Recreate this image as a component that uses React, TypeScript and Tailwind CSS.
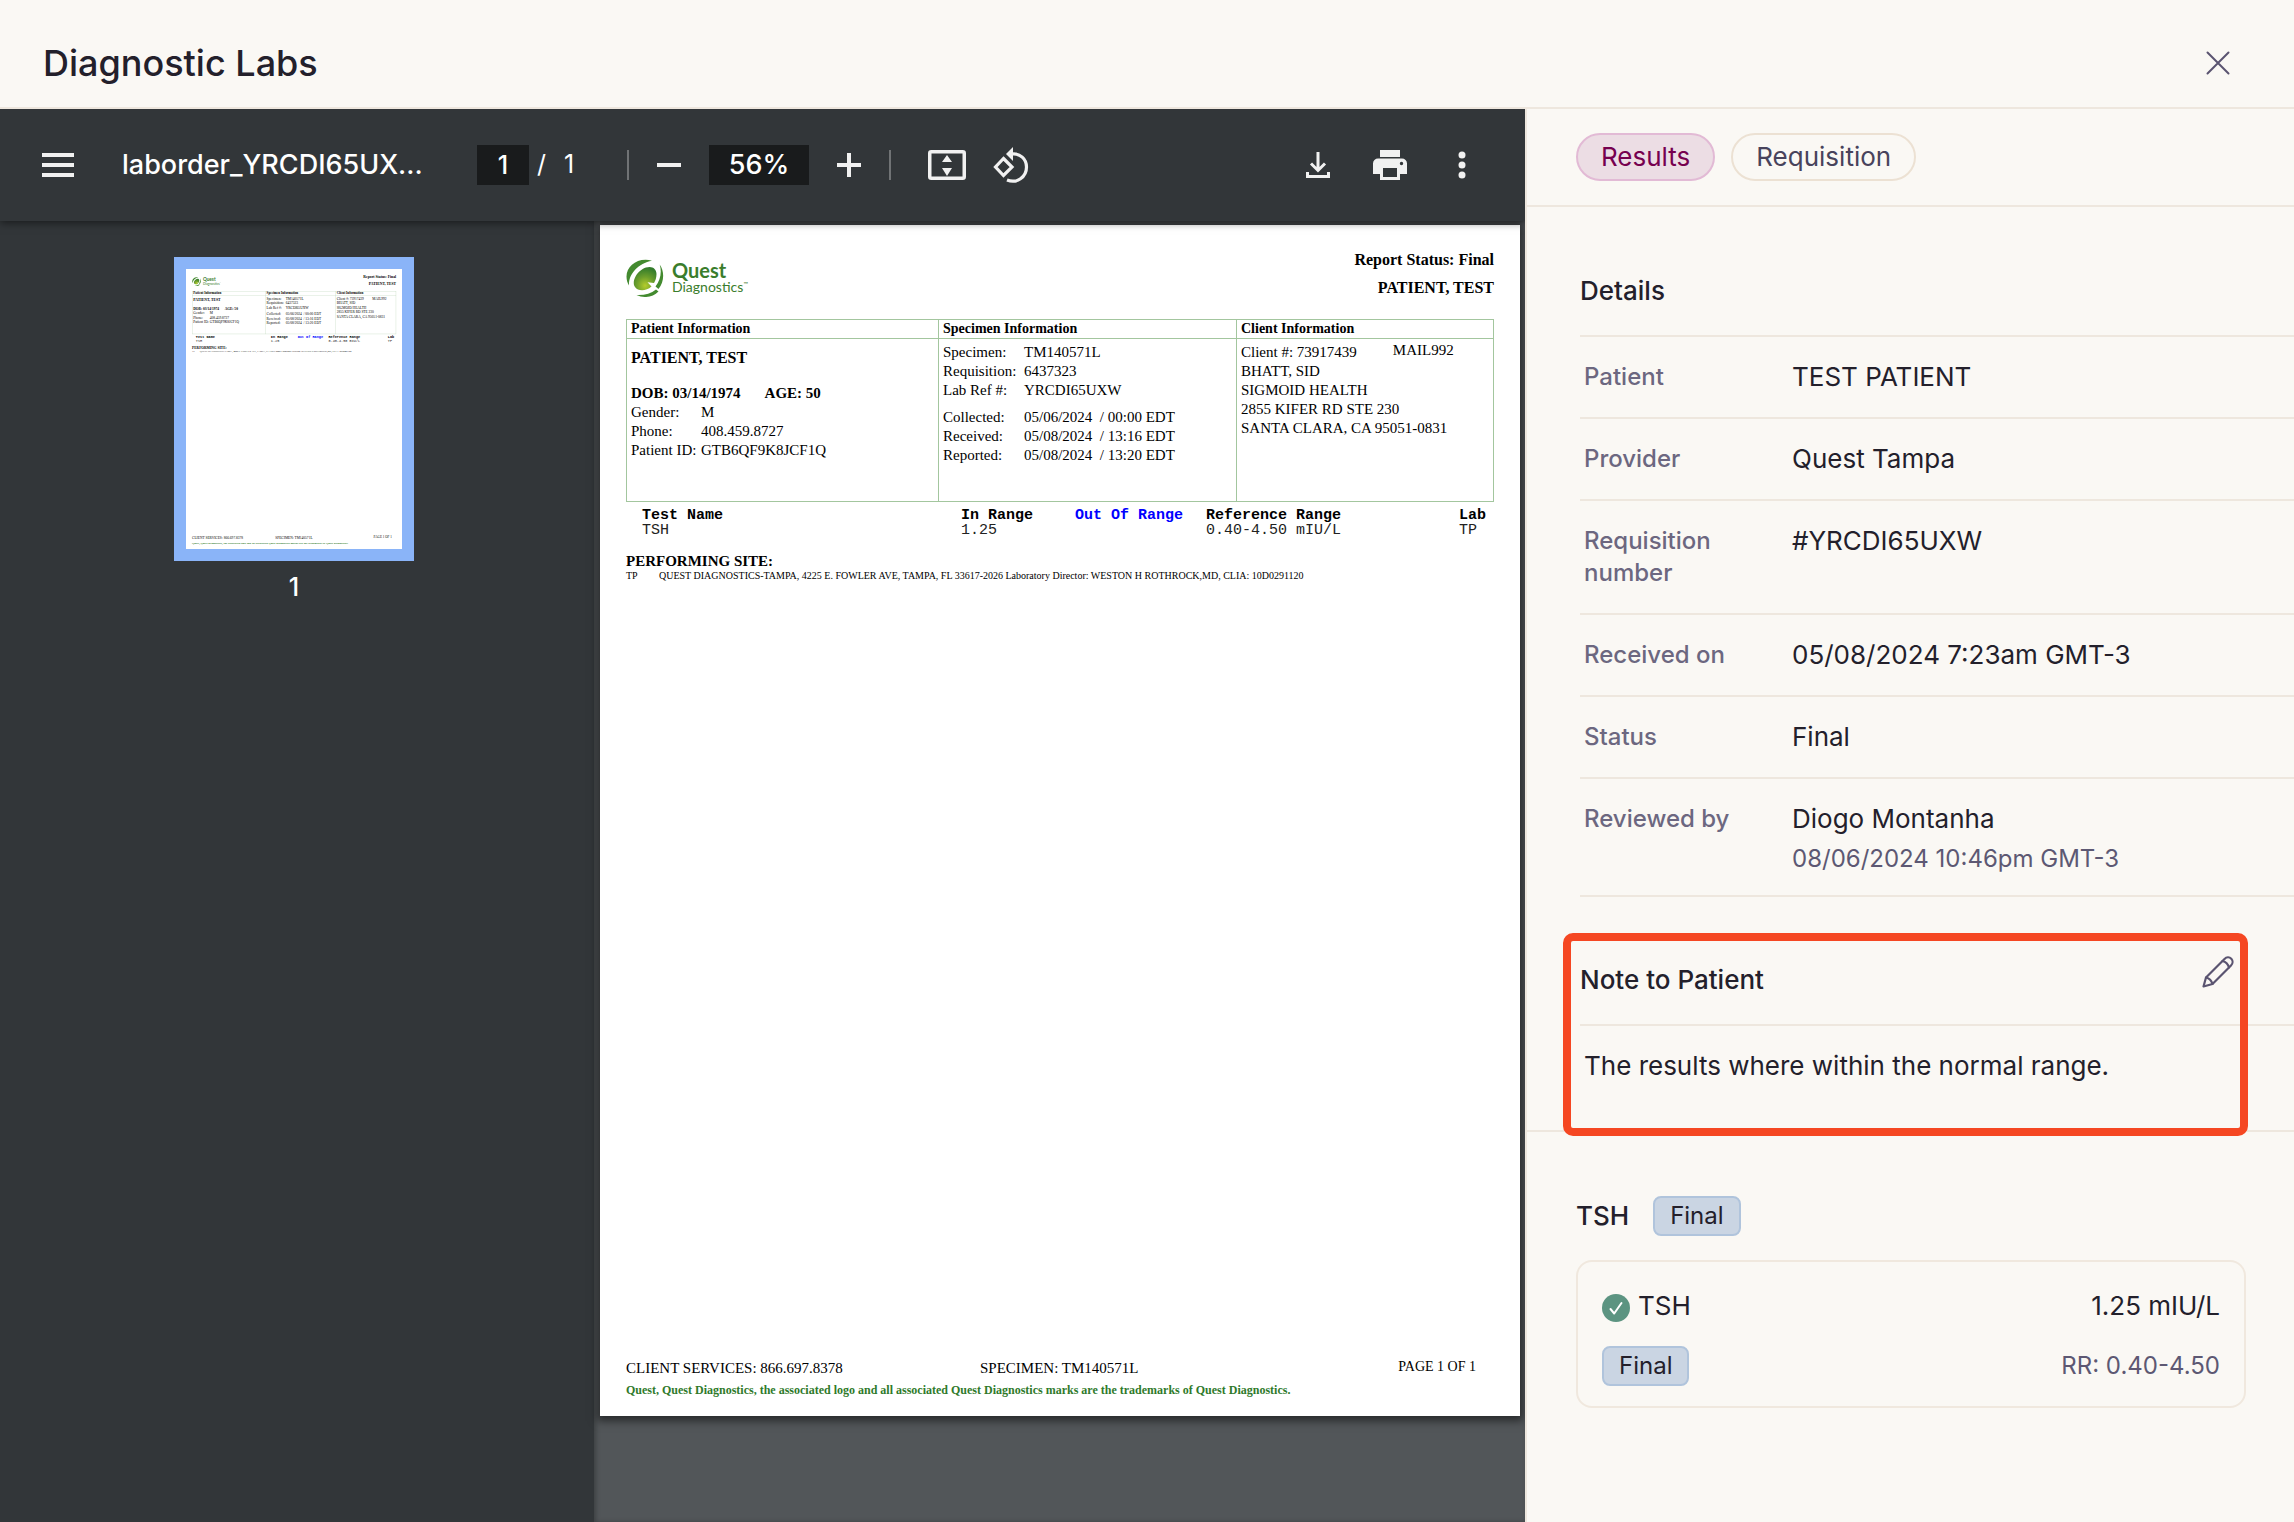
import { useState } from "react";

const DETAILS = [
  { label: "Patient", value: "TEST PATIENT" },
  { label: "Provider", value: "Quest Tampa" },
  { label: "Requisition number", value: "#YRCDI65UXW" },
  { label: "Received on", value: "05/08/2024 7:23am GMT-3" },
  { label: "Status", value: "Final" },
] as const;

const SPECIMEN_IDS = [
  ["Specimen:", "TM140571L"],
  ["Requisition:", "6437323"],
  ["Lab Ref #:", "YRCDI65UXW"],
] as const;

const SPECIMEN_DATES = [
  ["Collected:", "05/06/2024  / 00:00 EDT"],
  ["Received:", "05/08/2024  / 13:16 EDT"],
  ["Reported:", "05/08/2024  / 13:20 EDT"],
] as const;

const PATIENT_FIELDS = [
  ["Gender:", "M"],
  ["Phone:", "408.459.8727"],
  ["Patient ID:", "GTB6QF9K8JCF1Q"],
] as const;

function QuestLogo(): React.JSX.Element {
  return (
    <div className="mt-[13px] flex items-center gap-2">
      <svg viewBox="0 0 38 38" className="h-[38px] w-[38px]" aria-hidden="true">
        <defs>
          <radialGradient id="quest-leaf" cx="0.5" cy="0.8" r="0.75">
            <stop offset="0" stopColor="#b4cc2c" />
            <stop offset="0.5" stopColor="#6d9f2c" />
            <stop offset="1" stopColor="#347c2c" />
          </radialGradient>
        </defs>
        <path d="M26 1.700C12-2 .5 7 .5 17.500C.5 21 1.500 24 3 26.500C2.500 15 12 4.500 26 1.700Z" fill="#438a2f" />
        <path
          d="M20 8.500C26 6.500 30.500 9.500 30.500 15C30.500 18.500 29.500 21.500 28 24L21.500 23.200L25.500 27.500C20 32.500 12 32.500 9 28C5 21.500 12 11 20 8.500Z"
          fill="url(#quest-leaf)"
        />
        <path d="M33.700 5.500C38.500 12 38.500 23 32.500 30L29.500 27.500C34.500 21 36 13 33.700 5.500Z" fill="#438a2f" />
        <path d="M10.500 36C18 36.500 25 34.500 30 30.500L32.500 32.500C27 38.500 18 39.500 10.500 36Z" fill="#438a2f" />
      </svg>
      <div className="font-[family-name:Lato,sans-serif] text-[#3a7d2c]">
        <div className="text-xl leading-[18px] font-bold">Quest</div>
        <div className="flex text-sm leading-4">
          Diagnostics
          <span className="text-[6px] leading-[10px]">™</span>
        </div>
      </div>
    </div>
  );
}

function FieldList({ fields, wide }: { readonly fields: readonly (readonly [string, string])[]; readonly wide?: boolean }): React.JSX.Element {
  return (
    <dl className={wide ? "grid grid-cols-[81px_1fr]" : "grid grid-cols-[70px_1fr]"}>
      {fields.map(([label, value]) => (
        <div key={label} className="contents">
          <dt className="whitespace-nowrap">{label}</dt>
          <dd className="whitespace-pre">{value}</dd>
        </div>
      ))}
    </dl>
  );
}

function ReportPage(): React.JSX.Element {
  return (
    <article className="flex aspect-[17/22] w-full flex-col bg-white px-[26px] pb-[18px] font-[family-name:'Liberation_Serif',serif] text-[15px] leading-[19px] text-black">
      <header className="flex h-[94px] items-start justify-between pt-[21px]">
        <QuestLogo />
        <div className="text-right text-base leading-7 font-bold">
          <p>Report Status: Final</p>
          <p>PATIENT, TEST</p>
        </div>
      </header>

      <table className="w-full table-fixed border-collapse">
        <thead>
          <tr className="text-left text-[14px] leading-[18px]">
            <th className="w-[312px] border border-[#a3c69e] px-1 py-0">Patient Information</th>
            <th className="w-[298px] border border-[#a3c69e] px-1 py-0">Specimen Information</th>
            <th className="border border-[#a3c69e] px-1 py-0">Client Information</th>
          </tr>
        </thead>
        <tbody>
          <tr className="h-[163px] align-top">
            <td className="border border-[#a3c69e] px-1 pt-[9px]">
              <p className="text-base leading-5 font-bold">PATIENT, TEST</p>
              <p className="mt-4 flex gap-6 font-bold">
                <span>DOB: 03/14/1974</span>
                <span>AGE: 50</span>
              </p>
              <FieldList fields={PATIENT_FIELDS} />
            </td>
            <td className="border border-[#a3c69e] px-1 pt-1">
              <FieldList fields={SPECIMEN_IDS} wide />
              <div className="mt-2">
                <FieldList fields={SPECIMEN_DATES} wide />
              </div>
            </td>
            <td className="border border-[#a3c69e] px-1 pt-1">
              <p className="flex gap-9">
                <span>Client #: 73917439</span>
                <span className="leading-[14px]">MAIL992</span>
              </p>
              <p>BHATT, SID</p>
              <p>SIGMOID HEALTH</p>
              <p>2855 KIFER RD STE 230</p>
              <p>SANTA CLARA, CA 95051-0831</p>
            </td>
          </tr>
        </tbody>
      </table>

      <table className="mt-1.5 w-full table-fixed font-[family-name:'Liberation_Mono',monospace] text-[15px] leading-[15px]">
        <thead>
          <tr className="text-left whitespace-nowrap">
            <th className="w-[335px] p-0 pl-4">Test Name</th>
            <th className="w-[114px] p-0">In Range</th>
            <th className="w-[131px] p-0 text-[#0000ff]">Out Of Range</th>
            <th className="w-[253px] p-0">Reference Range</th>
            <th className="p-0">Lab</th>
          </tr>
        </thead>
        <tbody>
          <tr className="text-[#222222]">
            <td className="p-0 pl-4">TSH</td>
            <td className="p-0">1.25</td>
            <td className="p-0" />
            <td className="p-0">0.40-4.50 mIU/L</td>
            <td className="p-0">TP</td>
          </tr>
        </tbody>
      </table>

      <h3 className="mt-3.5 text-[15px] leading-[18px] font-bold">PERFORMING SITE:</h3>
      <p className="flex text-[10px] leading-3">
        <span className="w-[33px]">TP</span>
        <span className="whitespace-nowrap">
          QUEST DIAGNOSTICS-TAMPA, 4225 E. FOWLER AVE, TAMPA, FL 33617-2026 Laboratory Director: WESTON H ROTHROCK,MD, CLIA: 10D0291120
        </span>
      </p>

      <footer className="mt-auto">
        <div className="flex pr-[18px]">
          <span className="w-[354px]">CLIENT SERVICES: 866.697.8378</span>
          <span className="flex-1">SPECIMEN: TM140571L</span>
          <span className="text-[14px] leading-4">PAGE 1 OF 1</span>
        </div>
        <p className="mt-1 text-[12px] leading-4 font-bold text-[#2f7a2b]">
          Quest, Quest Diagnostics, the associated logo and all associated Quest Diagnostics marks are the trademarks of Quest Diagnostics.
        </p>
      </footer>
    </article>
  );
}

function ViewerToolbar(): React.JSX.Element {
  return (
    <div className="relative z-10 flex h-28 shrink-0 items-center bg-[#323639] pr-[58px] pl-[42px] text-[27px] font-medium text-white shadow-[0_2px_8px_rgba(0,0,0,0.5)]">
      <button type="button" aria-label="Menu">
        <svg viewBox="0 0 32 24" className="h-6 w-8" fill="#f1f1f1">
          <path d="M0 0h32v4H0zM0 10h32v4H0zM0 20h32v4H0z" />
        </svg>
      </button>
      <span className="ml-12 w-[355px] whitespace-nowrap">laborder_YRCDI65UX...</span>
      <div className="flex w-[150px] items-center text-[25px] font-normal">
        <input aria-label="Page number" defaultValue="1" className="h-10 w-[52px] bg-[#191b1c] text-center font-medium" />
        <span className="ml-2">/</span>
        <span className="ml-[18px]">1</span>
      </div>
      <span className="h-[30px] w-0.5 bg-[#707375]" />
      <div className="mx-7 flex items-center gap-7">
        <button type="button" aria-label="Zoom out">
          <svg viewBox="0 0 24 24" className="size-6" fill="#f1f1f1">
            <path d="M0 10h24v4H0z" />
          </svg>
        </button>
        <input aria-label="Zoom level" defaultValue="56%" className="h-10 w-[100px] bg-[#191b1c] text-center" />
        <button type="button" aria-label="Zoom in">
          <svg viewBox="0 0 24 24" className="size-6" fill="#f1f1f1">
            <path d="M0 10h10V0h4v10h10v4H14v10h-4V14H0z" />
          </svg>
        </button>
      </div>
      <span className="h-[30px] w-0.5 bg-[#707375]" />
      <button type="button" aria-label="Fit to page" className="ml-[37px]">
        <svg viewBox="0 0 38 30" className="h-[30px] w-[38px]">
          <rect x="1.750" y="1.750" width="34.500" height="26.500" rx="1.500" fill="none" stroke="#f1f1f1" strokeWidth="3.500" />
          <path d="M19 5l5 7H14zM19 26l5-8H14z" fill="#f1f1f1" />
        </svg>
      </button>
      <button type="button" aria-label="Rotate counterclockwise" className="ml-[27px]">
        <svg viewBox="0 0 36 36" className="size-9" fill="none" stroke="#f1f1f1">
          <path d="M10.500 11.500L19 20L10.500 28.500L2.500 20Z" strokeWidth="3.200" />
          <path d="M19 7C27 6 33.500 12 33.500 20C33.500 30 24 37 14 33" strokeWidth="3.200" />
          <path d="M20 0v14l-7-7z" fill="#f1f1f1" stroke="none" />
        </svg>
      </button>
      <div className="ml-auto flex items-center">
        <button type="button" aria-label="Download">
          <svg viewBox="0 0 24 26" className="h-[26px] w-6" fill="none" stroke="#f1f1f1" strokeWidth="3">
            <path d="M12 0v18M5 11.500l7 7l7-7M1.500 20v4.500h21V20" />
          </svg>
        </button>
        <button type="button" aria-label="Print" className="ml-[43px]">
          <svg viewBox="0 0 34 30" className="h-[30px] w-[34px]" fill="#f1f1f1">
            <path d="M7 0h20v7H7z" />
            <path
              fillRule="evenodd"
              d="M5 8.500h24a5 5 0 0 1 5 5V24h-7v6H7v-6H0V13.500a5 5 0 0 1 5-5zM10 18v9h14v-9zM28.500 11.800a1.700 1.700 0 1 0 0 3.400a1.700 1.700 0 0 0 0-3.400z"
            />
          </svg>
        </button>
        <button type="button" aria-label="More actions" className="ml-[50px]">
          <svg viewBox="0 0 10 28" className="h-7 w-2.5" fill="#f1f1f1">
            <circle cx="5" cy="4" r="3.500" />
            <circle cx="5" cy="14" r="3.500" />
            <circle cx="5" cy="24" r="3.500" />
          </svg>
        </button>
      </div>
    </div>
  );
}

function PdfViewer(): React.JSX.Element {
  return (
    <div className="flex min-w-0 flex-1 flex-col overflow-hidden">
      <ViewerToolbar />
      <div className="flex flex-1">
        <nav aria-label="Pages" className="flex w-[594px] shrink-0 flex-col items-center bg-[#323639] pt-9 pr-1.5">
          <button type="button" aria-label="Page 1" className="bg-[#8ab4f8] p-3">
            {/* miniature of the first page */}
            <div aria-hidden="true" className="h-[280px] w-[216px] overflow-hidden bg-white text-left">
              <div className="w-[920px] origin-top-left scale-[0.235]">
                <ReportPage />
              </div>
            </div>
          </button>
          <span className="mt-2.5 text-[25px] leading-8 font-medium text-white">1</span>
        </nav>
        <div className="min-w-0 flex-1 bg-[#525659] pt-1 pr-[5px] pl-1.5 shadow-[inset_2px_0_4px_rgba(0,0,0,0.25)]">
          <div className="shadow-[0_2px_8px_3px_rgba(0,0,0,0.5)]">
            <ReportPage />
          </div>
        </div>
      </div>
    </div>
  );
}

function StatusBadge({ children }: { readonly children: React.ReactNode }): React.JSX.Element {
  return (
    <span className="flex h-10 items-center rounded-lg border-2 border-[#b0c4dc] bg-[#cad5e3] px-[15px] text-[24px] leading-8">
      {children}
    </span>
  );
}

function Tabs(): React.JSX.Element {
  const [active, setActive] = useState("Results");

  return (
    <div role="tablist" className="flex gap-4 border-b-2 border-[#eee7de] py-6 pl-[49px]">
      {["Results", "Requisition"].map((tab) => (
        <button
          key={tab}
          type="button"
          role="tab"
          aria-selected={active === tab}
          onClick={() => setActive(tab)}
          className={`h-12 rounded-full border-2 px-[23px] text-[26px] leading-8 ${
            active === tab ? "border-[#e2bad5] bg-[#ecdde4] text-[#76004f]" : "border-[#ece1d3] text-[#48435c]"
          }`}
        >
          {tab}
        </button>
      ))}
    </div>
  );
}

function ResultsPanel(): React.JSX.Element {
  return (
    <aside className="w-[769px] shrink-0 border-l-2 border-[#eee7de] text-[26px] leading-8">
      <Tabs />

      <section className="pl-[53px]">
        <h2 className="border-b-2 border-[#eee7de] pt-[68px] pb-7 font-medium">Details</h2>
        <dl>
          {DETAILS.map(({ label, value }) => (
            <div key={label} className="flex border-b-2 border-[#eee7de] py-6 pl-1">
              <dt className="w-[208px] shrink-0 pr-14 text-[24px] font-medium text-[#6c6780]">{label}</dt>
              <dd>{value}</dd>
            </div>
          ))}
          <div className="flex border-b-2 border-[#eee7de] pt-6 pb-5 pl-1">
            <dt className="w-[208px] shrink-0 text-[24px] font-medium text-[#6c6780]">Reviewed by</dt>
            <dd>
              Diogo Montanha
              <p className="mt-2 text-[24px] text-[#5d5873]">08/06/2024 10:46pm GMT-3</p>
            </dd>
          </div>
        </dl>
      </section>

      <section className="relative border-b-2 border-[#eee7de] pb-12 pl-[53px]">
        <div className="flex items-start justify-between border-b-2 border-[#eee7de] pt-[59px] pr-[60px] pb-7">
          <h2 className="pt-2 font-medium">Note to Patient</h2>
          <button type="button" aria-label="Edit note">
            <svg viewBox="0 0 32 32" className="size-8" fill="none" stroke="#5a5470" strokeWidth="2.200" strokeLinejoin="round" strokeLinecap="round">
              <path d="M1.500 30.500L4 21.500L22.500 3C24.500 1 27.500 1 29.300 2.700C31 4.500 31 7.500 29 9.500L10.500 28Z" />
              <path d="M4 21.500C7.500 22.500 9.500 24.500 10.500 28M20.500 5C24 6 26 8 27 11.500" />
            </svg>
          </button>
        </div>
        <p className="pt-6 pl-1">The results where within the normal range.</p>
        <div className="pointer-events-none absolute top-9 right-[46px] -bottom-1.5 left-9 rounded-[10px] border-8 border-[#f54722]" />
      </section>

      <section className="pt-16 pr-12 pl-[49px]">
        <div className="flex items-center gap-6">
          <h2 className="font-medium">TSH</h2>
          <StatusBadge>Final</StatusBadge>
        </div>
        <div className="mt-6 rounded-2xl border-2 border-[#f0e8de] px-6 pt-7 pb-5">
          <div className="flex items-center justify-between">
            <span className="flex items-center gap-2">
              <svg viewBox="0 0 28 28" className="mt-1 size-7" aria-hidden="true">
                <circle cx="14" cy="14" r="14" fill="#5c9481" />
                <path d="M8.500 15l3.700 4.500L19.500 9" fill="none" stroke="#fff" strokeWidth="2" strokeLinecap="round" strokeLinejoin="round" />
              </svg>
              TSH
            </span>
            <span>1.25 mIU/L</span>
          </div>
          <div className="mt-6 flex items-center justify-between">
            <StatusBadge>Final</StatusBadge>
            <span className="text-[24px] text-[#5d5873]">RR: 0.40-4.50</span>
          </div>
        </div>
      </section>
    </aside>
  );
}

export default function App(): React.JSX.Element {
  return (
    <main className="flex min-h-screen flex-col bg-[#faf8f4] font-[family-name:Inter,sans-serif] text-[#23202b]">
      <header className="flex h-[109px] shrink-0 items-center justify-between border-b-2 border-[#eee7de] pt-[18px] pr-16 pl-[43px]">
        <h1 className="text-[36px] leading-10 font-medium">Diagnostic Labs</h1>
        <button type="button" aria-label="Close">
          <svg viewBox="0 0 24 24" className="size-6" fill="none" stroke="#5a5470" strokeWidth="2" strokeLinecap="round">
            <path d="M1.500 1.500l21 21M22.500 1.500l-21 21" />
          </svg>
        </button>
      </header>
      <div className="flex flex-1">
        <PdfViewer />
        <ResultsPanel />
      </div>
    </main>
  );
}
